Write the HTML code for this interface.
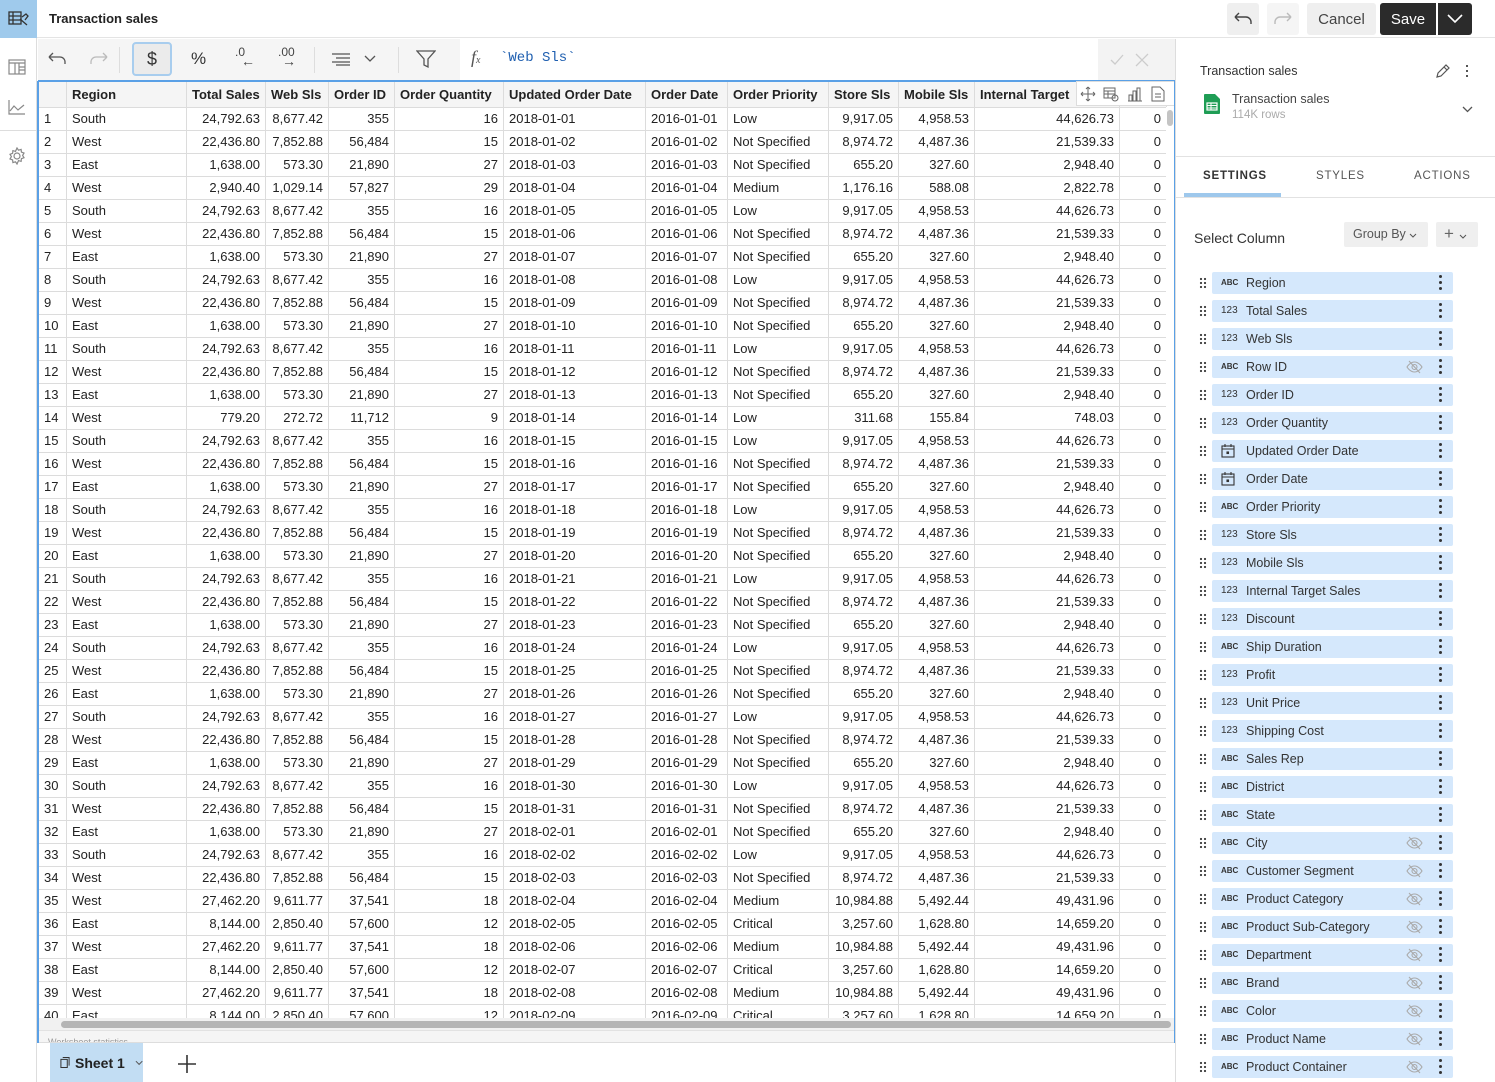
<!DOCTYPE html>
<html style="overflow:hidden;height:1082px"><head><meta charset="utf-8">
<style>
*{box-sizing:border-box;margin:0;padding:0}
body{width:1495px;height:1082px;overflow:hidden;background:#fff;font-family:"Liberation Sans","DejaVu Sans",sans-serif;color:#222;position:relative}
.abs{position:absolute}
#rail{left:0;top:0;width:37px;height:1082px;border-right:1px solid #ddd;background:#fff}
#topbar{left:37px;top:0;width:1458px;height:38px;border-bottom:1px solid #e4e4e4}
.btn{position:absolute;top:3px;height:32px;border-radius:3px;background:#efefef;display:flex;align-items:center;justify-content:center;font-size:15px;color:#444}
#tool{left:38px;top:39px;width:422px;height:41px;background:#f5f5f5}
#fx{left:460px;top:39px;width:638px;height:41px;background:#fff}
#ok{left:1098px;top:39px;width:77px;height:41px;background:#f3f3f3}
#tw{left:38px;top:80px;width:1137px;height:940px;overflow:hidden;border-top:2px solid #5aa0e6}
table{border-collapse:collapse;table-layout:fixed;font-size:13px}
td,th{height:23px;border:1px solid #dcdcdc;padding:0 5px;white-space:nowrap;overflow:hidden;line-height:21px}
th{background:#f5f5f5;font-weight:bold;text-align:left;height:25px;border-top:none}
td.n{text-align:right}
#panel{left:1175px;top:39px;width:320px;height:1043px;border-left:1px solid #ddd}
.item{position:absolute;left:1212px;width:241px;height:22px;background:#d5e8fc;border-radius:2px;font-size:12.5px;color:#333;line-height:22px}
.item .t{position:absolute;left:34px}
.item .ic{position:absolute;left:9px;font-size:8px;font-weight:bold;color:#333}
.item .dots{position:absolute;right:11px;top:3px;width:3px}
.item .dots i{display:block;width:3px;height:3px;background:#333;border-radius:50%;margin-bottom:3px}
.grip{position:absolute;left:1199px;width:8px;height:12px;background-image:radial-gradient(circle,#444 1px,transparent 1.3px);background-size:4px 4px}
.eye{position:absolute;right:30px;top:4px}
</style></head><body>

<div id="rail" class="abs">
 <div class="abs" style="left:0;top:0;width:37px;height:38px;background:#9fcaec"></div>
 <svg class="abs" style="left:8px;top:10px" width="22" height="18" viewBox="0 0 22 18" fill="none" stroke="#333" stroke-width="1.3"><rect x="1" y="2" width="12" height="12"/><path d="M1 6h12M1 10h12M5 2v12"/><path d="M12 9l7 6M14 7l4-3 2 2-3 4"/></svg>
 <svg class="abs" style="left:8px;top:59px" width="18" height="16" viewBox="0 0 18 16" fill="none" stroke="#888" stroke-width="1.2"><rect x="1" y="1" width="16" height="14"/><path d="M1 4h16M7 4v11M11 4v11M11 8h6M11 11h6"/></svg>
 <svg class="abs" style="left:8px;top:99px" width="18" height="16" viewBox="0 0 18 16" fill="none" stroke="#888" stroke-width="1.2"><path d="M1 1v14h16M2 12l4-5 4 4 6-5"/></svg>
 <div class="abs" style="left:0;top:130px;width:37px;border-top:1px solid #ddd"></div>
 <svg class="abs" style="left:8px;top:147px" width="18" height="18" viewBox="0 0 18 18" fill="none" stroke="#888" stroke-width="1.2"><circle cx="9" cy="9" r="3"/><path d="M9 1l1.5 2.2 2.6-.8.3 2.7 2.6 1-1.4 2.3 1.4 2.3-2.6 1-.3 2.7-2.6-.8L9 17l-1.5-2.2-2.6.8-.3-2.7-2.6-1L3.4 9.6 2 7.3l2.6-1 .3-2.7 2.6.8z"/></svg>
</div>

<div id="topbar" class="abs">
 <div class="abs" style="left:12px;top:11px;font-size:13px;font-weight:bold">Transaction sales</div>
 <div class="btn" style="left:1190px;width:32px"><svg width="20" height="14" viewBox="0 0 20 14" fill="none" stroke="#444" stroke-width="1.4"><path d="M2 5h11a5 5 0 0 1 5 5v2M2 5l4-4M2 5l4 4"/></svg></div>
 <div class="btn" style="left:1230px;width:32px;background:#f5f5f5"><svg width="20" height="14" viewBox="0 0 20 14" fill="none" stroke="#bbb" stroke-width="1.4"><path d="M18 5H7a5 5 0 0 0-5 5v2M18 5l-4-4M18 5l-4 4"/></svg></div>
 <div class="btn" style="left:1270px;width:69px">Cancel</div>
 <div class="btn" style="left:1343px;width:56px;background:#2b2b2b;color:#fff;border-radius:3px 0 0 3px">Save</div>
 <div class="btn" style="left:1401px;width:34px;background:#2b2b2b;border-radius:0 3px 3px 0"><svg width="16" height="10" viewBox="0 0 16 10" fill="none" stroke="#fff" stroke-width="1.6"><path d="M1 1l7 7 7-7"/></svg></div>
</div>

<div id="tool" class="abs">
 <svg class="abs" style="left:9px;top:13px" width="20" height="14" viewBox="0 0 20 14" fill="none" stroke="#555" stroke-width="1.3"><path d="M2 5h11a5 5 0 0 1 5 5v2M2 5l4-4M2 5l4 4"/></svg>
 <svg class="abs" style="left:51px;top:13px" width="20" height="14" viewBox="0 0 20 14" fill="none" stroke="#bbb" stroke-width="1.3"><path d="M18 5H7a5 5 0 0 0-5 5v2M18 5l-4-4M18 5l-4 4"/></svg>
 <div class="abs" style="left:81px;top:8px;height:26px;border-left:1px solid #ddd"></div>
 <div class="abs" style="left:94px;top:3px;width:40px;height:34px;border:2px solid #a8cdee;border-radius:4px;background:#ebebeb;font-size:18px;text-align:center;line-height:30px;color:#333">$</div>
 <div class="abs" style="left:153px;top:10px;font-size:17px;color:#333">%</div>
 <div class="abs" style="left:197px;top:6px;font-size:12px;color:#444">.0<br><span style="position:relative;left:6px;top:-6px;font-size:14px">←</span></div>
 <div class="abs" style="left:240px;top:6px;font-size:12px;color:#444">.00<br><span style="position:relative;left:4px;top:-6px;font-size:14px">→</span></div>
 <div class="abs" style="left:276px;top:8px;height:26px;border-left:1px solid #ddd"></div>
 <svg class="abs" style="left:293px;top:13px" width="50" height="14" viewBox="0 0 50 14" fill="none" stroke="#555" stroke-width="1.3"><path d="M1 2h18M5 6h14M1 10h18M5 13h14M34 4l5 5 5-5"/></svg>
 <div class="abs" style="left:360px;top:8px;height:26px;border-left:1px solid #ddd"></div>
 <svg class="abs" style="left:378px;top:11px" width="20" height="19" viewBox="0 0 20 19" fill="none" stroke="#555" stroke-width="1.3"><path d="M1 1h18l-7 8v8l-4-2V9z"/></svg>
</div>
<div id="fx" class="abs">
 <div class="abs" style="left:11px;top:8px;font-style:italic;font-family:'Liberation Serif',serif;font-size:18px;color:#555">f<span style="font-size:10px">x</span></div>
 <div class="abs" style="left:40px;top:11px;font-family:'Liberation Mono',monospace;font-size:14px;color:#1f5fb0">`Web Sls`</div>
</div>
<div id="ok" class="abs">
 <svg class="abs" style="left:12px;top:14px" width="40" height="14" viewBox="0 0 40 14" fill="none" stroke="#ccc" stroke-width="1.3"><path d="M1 7l4 4 8-9M26 1l12 12M38 1L26 13"/></svg>
</div>

<div id="tw" class="abs">
<table>
<colgroup><col style="width:28px"><col style="width:120px"><col style="width:79px"><col style="width:63px"><col style="width:66px"><col style="width:109px"><col style="width:142px"><col style="width:82px"><col style="width:101px"><col style="width:70px"><col style="width:76px"><col style="width:145px"><col style="width:47px"></colgroup>
<tr><th></th><th>Region</th><th>Total Sales</th><th>Web Sls</th><th>Order ID</th><th>Order Quantity</th><th>Updated Order Date</th><th>Order Date</th><th>Order Priority</th><th>Store Sls</th><th>Mobile Sls</th><th>Internal Target</th><th></th></tr>
<tr><td>1</td><td>South</td><td class="n">24,792.63</td><td class="n">8,677.42</td><td class="n">355</td><td class="n">16</td><td>2018-01-01</td><td>2016-01-01</td><td>Low</td><td class="n">9,917.05</td><td class="n">4,958.53</td><td class="n">44,626.73</td><td class="n">0</td></tr>
<tr><td>2</td><td>West</td><td class="n">22,436.80</td><td class="n">7,852.88</td><td class="n">56,484</td><td class="n">15</td><td>2018-01-02</td><td>2016-01-02</td><td>Not Specified</td><td class="n">8,974.72</td><td class="n">4,487.36</td><td class="n">21,539.33</td><td class="n">0</td></tr>
<tr><td>3</td><td>East</td><td class="n">1,638.00</td><td class="n">573.30</td><td class="n">21,890</td><td class="n">27</td><td>2018-01-03</td><td>2016-01-03</td><td>Not Specified</td><td class="n">655.20</td><td class="n">327.60</td><td class="n">2,948.40</td><td class="n">0</td></tr>
<tr><td>4</td><td>West</td><td class="n">2,940.40</td><td class="n">1,029.14</td><td class="n">57,827</td><td class="n">29</td><td>2018-01-04</td><td>2016-01-04</td><td>Medium</td><td class="n">1,176.16</td><td class="n">588.08</td><td class="n">2,822.78</td><td class="n">0</td></tr>
<tr><td>5</td><td>South</td><td class="n">24,792.63</td><td class="n">8,677.42</td><td class="n">355</td><td class="n">16</td><td>2018-01-05</td><td>2016-01-05</td><td>Low</td><td class="n">9,917.05</td><td class="n">4,958.53</td><td class="n">44,626.73</td><td class="n">0</td></tr>
<tr><td>6</td><td>West</td><td class="n">22,436.80</td><td class="n">7,852.88</td><td class="n">56,484</td><td class="n">15</td><td>2018-01-06</td><td>2016-01-06</td><td>Not Specified</td><td class="n">8,974.72</td><td class="n">4,487.36</td><td class="n">21,539.33</td><td class="n">0</td></tr>
<tr><td>7</td><td>East</td><td class="n">1,638.00</td><td class="n">573.30</td><td class="n">21,890</td><td class="n">27</td><td>2018-01-07</td><td>2016-01-07</td><td>Not Specified</td><td class="n">655.20</td><td class="n">327.60</td><td class="n">2,948.40</td><td class="n">0</td></tr>
<tr><td>8</td><td>South</td><td class="n">24,792.63</td><td class="n">8,677.42</td><td class="n">355</td><td class="n">16</td><td>2018-01-08</td><td>2016-01-08</td><td>Low</td><td class="n">9,917.05</td><td class="n">4,958.53</td><td class="n">44,626.73</td><td class="n">0</td></tr>
<tr><td>9</td><td>West</td><td class="n">22,436.80</td><td class="n">7,852.88</td><td class="n">56,484</td><td class="n">15</td><td>2018-01-09</td><td>2016-01-09</td><td>Not Specified</td><td class="n">8,974.72</td><td class="n">4,487.36</td><td class="n">21,539.33</td><td class="n">0</td></tr>
<tr><td>10</td><td>East</td><td class="n">1,638.00</td><td class="n">573.30</td><td class="n">21,890</td><td class="n">27</td><td>2018-01-10</td><td>2016-01-10</td><td>Not Specified</td><td class="n">655.20</td><td class="n">327.60</td><td class="n">2,948.40</td><td class="n">0</td></tr>
<tr><td>11</td><td>South</td><td class="n">24,792.63</td><td class="n">8,677.42</td><td class="n">355</td><td class="n">16</td><td>2018-01-11</td><td>2016-01-11</td><td>Low</td><td class="n">9,917.05</td><td class="n">4,958.53</td><td class="n">44,626.73</td><td class="n">0</td></tr>
<tr><td>12</td><td>West</td><td class="n">22,436.80</td><td class="n">7,852.88</td><td class="n">56,484</td><td class="n">15</td><td>2018-01-12</td><td>2016-01-12</td><td>Not Specified</td><td class="n">8,974.72</td><td class="n">4,487.36</td><td class="n">21,539.33</td><td class="n">0</td></tr>
<tr><td>13</td><td>East</td><td class="n">1,638.00</td><td class="n">573.30</td><td class="n">21,890</td><td class="n">27</td><td>2018-01-13</td><td>2016-01-13</td><td>Not Specified</td><td class="n">655.20</td><td class="n">327.60</td><td class="n">2,948.40</td><td class="n">0</td></tr>
<tr><td>14</td><td>West</td><td class="n">779.20</td><td class="n">272.72</td><td class="n">11,712</td><td class="n">9</td><td>2018-01-14</td><td>2016-01-14</td><td>Low</td><td class="n">311.68</td><td class="n">155.84</td><td class="n">748.03</td><td class="n">0</td></tr>
<tr><td>15</td><td>South</td><td class="n">24,792.63</td><td class="n">8,677.42</td><td class="n">355</td><td class="n">16</td><td>2018-01-15</td><td>2016-01-15</td><td>Low</td><td class="n">9,917.05</td><td class="n">4,958.53</td><td class="n">44,626.73</td><td class="n">0</td></tr>
<tr><td>16</td><td>West</td><td class="n">22,436.80</td><td class="n">7,852.88</td><td class="n">56,484</td><td class="n">15</td><td>2018-01-16</td><td>2016-01-16</td><td>Not Specified</td><td class="n">8,974.72</td><td class="n">4,487.36</td><td class="n">21,539.33</td><td class="n">0</td></tr>
<tr><td>17</td><td>East</td><td class="n">1,638.00</td><td class="n">573.30</td><td class="n">21,890</td><td class="n">27</td><td>2018-01-17</td><td>2016-01-17</td><td>Not Specified</td><td class="n">655.20</td><td class="n">327.60</td><td class="n">2,948.40</td><td class="n">0</td></tr>
<tr><td>18</td><td>South</td><td class="n">24,792.63</td><td class="n">8,677.42</td><td class="n">355</td><td class="n">16</td><td>2018-01-18</td><td>2016-01-18</td><td>Low</td><td class="n">9,917.05</td><td class="n">4,958.53</td><td class="n">44,626.73</td><td class="n">0</td></tr>
<tr><td>19</td><td>West</td><td class="n">22,436.80</td><td class="n">7,852.88</td><td class="n">56,484</td><td class="n">15</td><td>2018-01-19</td><td>2016-01-19</td><td>Not Specified</td><td class="n">8,974.72</td><td class="n">4,487.36</td><td class="n">21,539.33</td><td class="n">0</td></tr>
<tr><td>20</td><td>East</td><td class="n">1,638.00</td><td class="n">573.30</td><td class="n">21,890</td><td class="n">27</td><td>2018-01-20</td><td>2016-01-20</td><td>Not Specified</td><td class="n">655.20</td><td class="n">327.60</td><td class="n">2,948.40</td><td class="n">0</td></tr>
<tr><td>21</td><td>South</td><td class="n">24,792.63</td><td class="n">8,677.42</td><td class="n">355</td><td class="n">16</td><td>2018-01-21</td><td>2016-01-21</td><td>Low</td><td class="n">9,917.05</td><td class="n">4,958.53</td><td class="n">44,626.73</td><td class="n">0</td></tr>
<tr><td>22</td><td>West</td><td class="n">22,436.80</td><td class="n">7,852.88</td><td class="n">56,484</td><td class="n">15</td><td>2018-01-22</td><td>2016-01-22</td><td>Not Specified</td><td class="n">8,974.72</td><td class="n">4,487.36</td><td class="n">21,539.33</td><td class="n">0</td></tr>
<tr><td>23</td><td>East</td><td class="n">1,638.00</td><td class="n">573.30</td><td class="n">21,890</td><td class="n">27</td><td>2018-01-23</td><td>2016-01-23</td><td>Not Specified</td><td class="n">655.20</td><td class="n">327.60</td><td class="n">2,948.40</td><td class="n">0</td></tr>
<tr><td>24</td><td>South</td><td class="n">24,792.63</td><td class="n">8,677.42</td><td class="n">355</td><td class="n">16</td><td>2018-01-24</td><td>2016-01-24</td><td>Low</td><td class="n">9,917.05</td><td class="n">4,958.53</td><td class="n">44,626.73</td><td class="n">0</td></tr>
<tr><td>25</td><td>West</td><td class="n">22,436.80</td><td class="n">7,852.88</td><td class="n">56,484</td><td class="n">15</td><td>2018-01-25</td><td>2016-01-25</td><td>Not Specified</td><td class="n">8,974.72</td><td class="n">4,487.36</td><td class="n">21,539.33</td><td class="n">0</td></tr>
<tr><td>26</td><td>East</td><td class="n">1,638.00</td><td class="n">573.30</td><td class="n">21,890</td><td class="n">27</td><td>2018-01-26</td><td>2016-01-26</td><td>Not Specified</td><td class="n">655.20</td><td class="n">327.60</td><td class="n">2,948.40</td><td class="n">0</td></tr>
<tr><td>27</td><td>South</td><td class="n">24,792.63</td><td class="n">8,677.42</td><td class="n">355</td><td class="n">16</td><td>2018-01-27</td><td>2016-01-27</td><td>Low</td><td class="n">9,917.05</td><td class="n">4,958.53</td><td class="n">44,626.73</td><td class="n">0</td></tr>
<tr><td>28</td><td>West</td><td class="n">22,436.80</td><td class="n">7,852.88</td><td class="n">56,484</td><td class="n">15</td><td>2018-01-28</td><td>2016-01-28</td><td>Not Specified</td><td class="n">8,974.72</td><td class="n">4,487.36</td><td class="n">21,539.33</td><td class="n">0</td></tr>
<tr><td>29</td><td>East</td><td class="n">1,638.00</td><td class="n">573.30</td><td class="n">21,890</td><td class="n">27</td><td>2018-01-29</td><td>2016-01-29</td><td>Not Specified</td><td class="n">655.20</td><td class="n">327.60</td><td class="n">2,948.40</td><td class="n">0</td></tr>
<tr><td>30</td><td>South</td><td class="n">24,792.63</td><td class="n">8,677.42</td><td class="n">355</td><td class="n">16</td><td>2018-01-30</td><td>2016-01-30</td><td>Low</td><td class="n">9,917.05</td><td class="n">4,958.53</td><td class="n">44,626.73</td><td class="n">0</td></tr>
<tr><td>31</td><td>West</td><td class="n">22,436.80</td><td class="n">7,852.88</td><td class="n">56,484</td><td class="n">15</td><td>2018-01-31</td><td>2016-01-31</td><td>Not Specified</td><td class="n">8,974.72</td><td class="n">4,487.36</td><td class="n">21,539.33</td><td class="n">0</td></tr>
<tr><td>32</td><td>East</td><td class="n">1,638.00</td><td class="n">573.30</td><td class="n">21,890</td><td class="n">27</td><td>2018-02-01</td><td>2016-02-01</td><td>Not Specified</td><td class="n">655.20</td><td class="n">327.60</td><td class="n">2,948.40</td><td class="n">0</td></tr>
<tr><td>33</td><td>South</td><td class="n">24,792.63</td><td class="n">8,677.42</td><td class="n">355</td><td class="n">16</td><td>2018-02-02</td><td>2016-02-02</td><td>Low</td><td class="n">9,917.05</td><td class="n">4,958.53</td><td class="n">44,626.73</td><td class="n">0</td></tr>
<tr><td>34</td><td>West</td><td class="n">22,436.80</td><td class="n">7,852.88</td><td class="n">56,484</td><td class="n">15</td><td>2018-02-03</td><td>2016-02-03</td><td>Not Specified</td><td class="n">8,974.72</td><td class="n">4,487.36</td><td class="n">21,539.33</td><td class="n">0</td></tr>
<tr><td>35</td><td>West</td><td class="n">27,462.20</td><td class="n">9,611.77</td><td class="n">37,541</td><td class="n">18</td><td>2018-02-04</td><td>2016-02-04</td><td>Medium</td><td class="n">10,984.88</td><td class="n">5,492.44</td><td class="n">49,431.96</td><td class="n">0</td></tr>
<tr><td>36</td><td>East</td><td class="n">8,144.00</td><td class="n">2,850.40</td><td class="n">57,600</td><td class="n">12</td><td>2018-02-05</td><td>2016-02-05</td><td>Critical</td><td class="n">3,257.60</td><td class="n">1,628.80</td><td class="n">14,659.20</td><td class="n">0</td></tr>
<tr><td>37</td><td>West</td><td class="n">27,462.20</td><td class="n">9,611.77</td><td class="n">37,541</td><td class="n">18</td><td>2018-02-06</td><td>2016-02-06</td><td>Medium</td><td class="n">10,984.88</td><td class="n">5,492.44</td><td class="n">49,431.96</td><td class="n">0</td></tr>
<tr><td>38</td><td>East</td><td class="n">8,144.00</td><td class="n">2,850.40</td><td class="n">57,600</td><td class="n">12</td><td>2018-02-07</td><td>2016-02-07</td><td>Critical</td><td class="n">3,257.60</td><td class="n">1,628.80</td><td class="n">14,659.20</td><td class="n">0</td></tr>
<tr><td>39</td><td>West</td><td class="n">27,462.20</td><td class="n">9,611.77</td><td class="n">37,541</td><td class="n">18</td><td>2018-02-08</td><td>2016-02-08</td><td>Medium</td><td class="n">10,984.88</td><td class="n">5,492.44</td><td class="n">49,431.96</td><td class="n">0</td></tr>
<tr><td>40</td><td>East</td><td class="n">8,144.00</td><td class="n">2,850.40</td><td class="n">57,600</td><td class="n">12</td><td>2018-02-09</td><td>2016-02-09</td><td>Critical</td><td class="n">3,257.60</td><td class="n">1,628.80</td><td class="n">14,659.20</td><td class="n">0</td></tr>
</table>
</div>
<div class="abs" style="left:1076px;top:81px;width:99px;height:25px;background:#fff;border:1px solid #ddd;display:flex">
 <svg style="margin:4px 0 0 3px" width="16" height="16" viewBox="0 0 16 16" fill="none" stroke="#666" stroke-width="1"><path d="M8 1v14M1 8h14M8 1l-2 2M8 1l2 2M8 15l-2-2M8 15l2-2M1 8l2-2M1 8l2 2M15 8l-2-2M15 8l-2 2"/></svg>
 <svg style="margin:4px 0 0 7px" width="16" height="16" viewBox="0 0 16 16" fill="none" stroke="#666" stroke-width="1"><rect x="1" y="2" width="11" height="10"/><path d="M1 5h11M1 8h11M5 5v7"/><circle cx="12" cy="12" r="3"/></svg>
 <svg style="margin:4px 0 0 8px" width="16" height="16" viewBox="0 0 16 16" fill="none" stroke="#666" stroke-width="1"><path d="M1 15h14M2 15V9h3v6M6 15V5h3v10M10 15V2h3v13"/></svg>
 <svg style="margin:4px 0 0 8px" width="14" height="16" viewBox="0 0 14 16" fill="none" stroke="#666" stroke-width="1"><path d="M1 1h8l4 4v10H1zM4 8h6M4 11h6"/></svg>
</div>
<div class="abs" style="left:1166px;top:107px;width:9px;height:913px;background:#fff"></div>
<div class="abs" style="left:1167px;top:110px;width:6px;height:16px;background:#c4c4c4;border-radius:3px"></div>
<div class="abs" style="left:38px;top:1018px;width:1137px;height:12px;background:#f1f1f1"></div>
<div class="abs" style="left:61px;top:1021px;width:1110px;height:7px;background:#b5b5b5;border-radius:4px"></div>
<div class="abs" style="left:38px;top:1030px;width:1137px;height:13px;background:#f5f5f5;border-top:1px solid #e2e2e2;border-bottom:1px solid #ddd;font-size:9px;color:#999;padding-left:10px;overflow:hidden;line-height:22px">Worksheet statistics</div>
<div class="abs" style="left:1174px;top:81px;width:2px;height:962px;background:#5aa0e6"></div>
<div class="abs" style="left:37px;top:81px;width:2px;height:962px;background:#5aa0e6"></div>
<div class="abs" style="left:50px;top:1043px;width:93px;height:39px;background:#c2ddf3;display:flex;align-items:center;white-space:nowrap;overflow:hidden;padding-left:10px">
 <svg width="11" height="13" viewBox="0 0 11 13" fill="none" stroke="#333" stroke-width="1.1"><path d="M3 1h7v9M1 3h7v9H1z"/></svg>
 <span style="font-size:14px;font-weight:bold;color:#222;margin-left:5px">Sheet 1</span>
 <svg style="margin-left:10px" width="9" height="6" viewBox="0 0 9 6" fill="none" stroke="#555" stroke-width="1.1"><path d="M1 1l3.5 3.5L8 1"/></svg>
</div>
<svg class="abs" style="left:178px;top:1055px" width="18" height="18" viewBox="0 0 18 18" stroke="#333" stroke-width="1.6"><path d="M9 0v18M0 9h18"/></svg>

<div id="panel" class="abs"></div>
<div class="abs" style="left:1200px;top:64px;font-size:12.5px;color:#333">Transaction sales</div>
<svg class="abs" style="left:1435px;top:63px" width="16" height="16" viewBox="0 0 16 16" fill="none" stroke="#555" stroke-width="1.2"><path d="M2 14l1-4 8-8 3 3-8 8zM9 4l3 3"/></svg>
<div class="abs" style="left:1466px;top:65px;width:3px"><i style="display:block;width:2px;height:2px;background:#555;margin-bottom:3px"></i><i style="display:block;width:2px;height:2px;background:#555;margin-bottom:3px"></i><i style="display:block;width:2px;height:2px;background:#555"></i></div>
<svg class="abs" style="left:1204px;top:94px" width="16" height="20" viewBox="0 0 16 20"><path d="M0 1a1 1 0 0 1 1-1h10l5 5v14a1 1 0 0 1-1 1H1a1 1 0 0 1-1-1z" fill="#1f9d55"/><rect x="3" y="9" width="10" height="7" fill="none" stroke="#fff" stroke-width="1.2"/><path d="M3 11.5h10M3 14h10M7 9v7" stroke="#fff" stroke-width="1"/></svg>
<div class="abs" style="left:1232px;top:92px;font-size:12.5px;color:#444">Transaction sales</div>
<div class="abs" style="left:1232px;top:109px;font-size:11.5px;color:#aaa">114K rows</div>
<svg class="abs" style="left:1462px;top:106px" width="11" height="7" viewBox="0 0 11 7" fill="none" stroke="#555" stroke-width="1.3"><path d="M1 1l4.5 4.5L10 1"/></svg>
<div class="abs" style="left:1176px;top:156px;width:319px;border-top:1px solid #e2e2e2"></div>
<div class="abs" style="left:1203px;top:170px;font-size:11.5px;font-weight:bold;letter-spacing:.8px;color:#333">SETTINGS</div>
<div class="abs" style="left:1316px;top:170px;font-size:11.5px;letter-spacing:.8px;color:#555">STYLES</div>
<div class="abs" style="left:1414px;top:170px;font-size:11.5px;letter-spacing:.8px;color:#555">ACTIONS</div>
<div class="abs" style="left:1184px;top:193px;width:97px;height:4px;background:#9ec8ec"></div>
<div class="abs" style="left:1176px;top:197px;width:319px;border-top:1px solid #e2e2e2"></div>
<div class="abs" style="left:1194px;top:230px;font-size:14px;color:#333">Select Column</div>
<div class="abs" style="left:1344px;top:222px;width:84px;height:25px;background:#efefef;border-radius:2px;font-size:12.5px;color:#555;line-height:25px;padding-left:9px;white-space:nowrap">Group By <svg width="8" height="5" viewBox="0 0 8 5" fill="none" stroke="#555"><path d="M1 1l3 3 3-3"/></svg></div>
<div class="abs" style="left:1436px;top:222px;width:42px;height:25px;background:#efefef;border-radius:2px;font-size:17px;color:#666;line-height:24px;padding-left:8px;white-space:nowrap">+ <svg width="8" height="5" viewBox="0 0 8 5" fill="none" stroke="#555"><path d="M1 1l3 3 3-3"/></svg></div>

<div class="grip" style="top:277px"></div><div class="item" style="top:272px"><span class="ic">ABC</span><span class="t">Region</span><span class="dots"><i></i><i></i><i></i></span></div>
<div class="grip" style="top:305px"></div><div class="item" style="top:300px"><span class="ic" style="font-size:10px;font-weight:normal">123</span><span class="t">Total Sales</span><span class="dots"><i></i><i></i><i></i></span></div>
<div class="grip" style="top:333px"></div><div class="item" style="top:328px"><span class="ic" style="font-size:10px;font-weight:normal">123</span><span class="t">Web Sls</span><span class="dots"><i></i><i></i><i></i></span></div>
<div class="grip" style="top:361px"></div><div class="item" style="top:356px"><span class="ic">ABC</span><span class="t">Row ID</span><svg class="eye" width="17" height="14" viewBox="0 0 17 14" fill="none" stroke="#aaa" stroke-width="1.1"><path d="M1 7s3-5 7.5-5S16 7 16 7s-3 5-7.5 5S1 7 1 7z"/><circle cx="8.5" cy="7" r="2.5"/><path d="M3 1l11 12"/></svg><span class="dots"><i></i><i></i><i></i></span></div>
<div class="grip" style="top:389px"></div><div class="item" style="top:384px"><span class="ic" style="font-size:10px;font-weight:normal">123</span><span class="t">Order ID</span><span class="dots"><i></i><i></i><i></i></span></div>
<div class="grip" style="top:417px"></div><div class="item" style="top:412px"><span class="ic" style="font-size:10px;font-weight:normal">123</span><span class="t">Order Quantity</span><span class="dots"><i></i><i></i><i></i></span></div>
<div class="grip" style="top:445px"></div><div class="item" style="top:440px"><svg class="ic" style="top:4px" width="14" height="14" viewBox="0 0 14 14" fill="none" stroke="#333" stroke-width="1.1"><rect x="1" y="2" width="12" height="11"/><path d="M1 5h12M4 0v3M10 0v3"/><rect x="6" y="8" width="1.5" height="1.5" fill="#333"/></svg><span class="t">Updated Order Date</span><span class="dots"><i></i><i></i><i></i></span></div>
<div class="grip" style="top:473px"></div><div class="item" style="top:468px"><svg class="ic" style="top:4px" width="14" height="14" viewBox="0 0 14 14" fill="none" stroke="#333" stroke-width="1.1"><rect x="1" y="2" width="12" height="11"/><path d="M1 5h12M4 0v3M10 0v3"/><rect x="6" y="8" width="1.5" height="1.5" fill="#333"/></svg><span class="t">Order Date</span><span class="dots"><i></i><i></i><i></i></span></div>
<div class="grip" style="top:501px"></div><div class="item" style="top:496px"><span class="ic">ABC</span><span class="t">Order Priority</span><span class="dots"><i></i><i></i><i></i></span></div>
<div class="grip" style="top:529px"></div><div class="item" style="top:524px"><span class="ic" style="font-size:10px;font-weight:normal">123</span><span class="t">Store Sls</span><span class="dots"><i></i><i></i><i></i></span></div>
<div class="grip" style="top:557px"></div><div class="item" style="top:552px"><span class="ic" style="font-size:10px;font-weight:normal">123</span><span class="t">Mobile Sls</span><span class="dots"><i></i><i></i><i></i></span></div>
<div class="grip" style="top:585px"></div><div class="item" style="top:580px"><span class="ic" style="font-size:10px;font-weight:normal">123</span><span class="t">Internal Target Sales</span><span class="dots"><i></i><i></i><i></i></span></div>
<div class="grip" style="top:613px"></div><div class="item" style="top:608px"><span class="ic" style="font-size:10px;font-weight:normal">123</span><span class="t">Discount</span><span class="dots"><i></i><i></i><i></i></span></div>
<div class="grip" style="top:641px"></div><div class="item" style="top:636px"><span class="ic">ABC</span><span class="t">Ship Duration</span><span class="dots"><i></i><i></i><i></i></span></div>
<div class="grip" style="top:669px"></div><div class="item" style="top:664px"><span class="ic" style="font-size:10px;font-weight:normal">123</span><span class="t">Profit</span><span class="dots"><i></i><i></i><i></i></span></div>
<div class="grip" style="top:697px"></div><div class="item" style="top:692px"><span class="ic" style="font-size:10px;font-weight:normal">123</span><span class="t">Unit Price</span><span class="dots"><i></i><i></i><i></i></span></div>
<div class="grip" style="top:725px"></div><div class="item" style="top:720px"><span class="ic" style="font-size:10px;font-weight:normal">123</span><span class="t">Shipping Cost</span><span class="dots"><i></i><i></i><i></i></span></div>
<div class="grip" style="top:753px"></div><div class="item" style="top:748px"><span class="ic">ABC</span><span class="t">Sales Rep</span><span class="dots"><i></i><i></i><i></i></span></div>
<div class="grip" style="top:781px"></div><div class="item" style="top:776px"><span class="ic">ABC</span><span class="t">District</span><span class="dots"><i></i><i></i><i></i></span></div>
<div class="grip" style="top:809px"></div><div class="item" style="top:804px"><span class="ic">ABC</span><span class="t">State</span><span class="dots"><i></i><i></i><i></i></span></div>
<div class="grip" style="top:837px"></div><div class="item" style="top:832px"><span class="ic">ABC</span><span class="t">City</span><svg class="eye" width="17" height="14" viewBox="0 0 17 14" fill="none" stroke="#aaa" stroke-width="1.1"><path d="M1 7s3-5 7.5-5S16 7 16 7s-3 5-7.5 5S1 7 1 7z"/><circle cx="8.5" cy="7" r="2.5"/><path d="M3 1l11 12"/></svg><span class="dots"><i></i><i></i><i></i></span></div>
<div class="grip" style="top:865px"></div><div class="item" style="top:860px"><span class="ic">ABC</span><span class="t">Customer Segment</span><svg class="eye" width="17" height="14" viewBox="0 0 17 14" fill="none" stroke="#aaa" stroke-width="1.1"><path d="M1 7s3-5 7.5-5S16 7 16 7s-3 5-7.5 5S1 7 1 7z"/><circle cx="8.5" cy="7" r="2.5"/><path d="M3 1l11 12"/></svg><span class="dots"><i></i><i></i><i></i></span></div>
<div class="grip" style="top:893px"></div><div class="item" style="top:888px"><span class="ic">ABC</span><span class="t">Product Category</span><svg class="eye" width="17" height="14" viewBox="0 0 17 14" fill="none" stroke="#aaa" stroke-width="1.1"><path d="M1 7s3-5 7.5-5S16 7 16 7s-3 5-7.5 5S1 7 1 7z"/><circle cx="8.5" cy="7" r="2.5"/><path d="M3 1l11 12"/></svg><span class="dots"><i></i><i></i><i></i></span></div>
<div class="grip" style="top:921px"></div><div class="item" style="top:916px"><span class="ic">ABC</span><span class="t">Product Sub-Category</span><svg class="eye" width="17" height="14" viewBox="0 0 17 14" fill="none" stroke="#aaa" stroke-width="1.1"><path d="M1 7s3-5 7.5-5S16 7 16 7s-3 5-7.5 5S1 7 1 7z"/><circle cx="8.5" cy="7" r="2.5"/><path d="M3 1l11 12"/></svg><span class="dots"><i></i><i></i><i></i></span></div>
<div class="grip" style="top:949px"></div><div class="item" style="top:944px"><span class="ic">ABC</span><span class="t">Department</span><svg class="eye" width="17" height="14" viewBox="0 0 17 14" fill="none" stroke="#aaa" stroke-width="1.1"><path d="M1 7s3-5 7.5-5S16 7 16 7s-3 5-7.5 5S1 7 1 7z"/><circle cx="8.5" cy="7" r="2.5"/><path d="M3 1l11 12"/></svg><span class="dots"><i></i><i></i><i></i></span></div>
<div class="grip" style="top:977px"></div><div class="item" style="top:972px"><span class="ic">ABC</span><span class="t">Brand</span><svg class="eye" width="17" height="14" viewBox="0 0 17 14" fill="none" stroke="#aaa" stroke-width="1.1"><path d="M1 7s3-5 7.5-5S16 7 16 7s-3 5-7.5 5S1 7 1 7z"/><circle cx="8.5" cy="7" r="2.5"/><path d="M3 1l11 12"/></svg><span class="dots"><i></i><i></i><i></i></span></div>
<div class="grip" style="top:1005px"></div><div class="item" style="top:1000px"><span class="ic">ABC</span><span class="t">Color</span><svg class="eye" width="17" height="14" viewBox="0 0 17 14" fill="none" stroke="#aaa" stroke-width="1.1"><path d="M1 7s3-5 7.5-5S16 7 16 7s-3 5-7.5 5S1 7 1 7z"/><circle cx="8.5" cy="7" r="2.5"/><path d="M3 1l11 12"/></svg><span class="dots"><i></i><i></i><i></i></span></div>
<div class="grip" style="top:1033px"></div><div class="item" style="top:1028px"><span class="ic">ABC</span><span class="t">Product Name</span><svg class="eye" width="17" height="14" viewBox="0 0 17 14" fill="none" stroke="#aaa" stroke-width="1.1"><path d="M1 7s3-5 7.5-5S16 7 16 7s-3 5-7.5 5S1 7 1 7z"/><circle cx="8.5" cy="7" r="2.5"/><path d="M3 1l11 12"/></svg><span class="dots"><i></i><i></i><i></i></span></div>
<div class="grip" style="top:1061px"></div><div class="item" style="top:1056px"><span class="ic">ABC</span><span class="t">Product Container</span><svg class="eye" width="17" height="14" viewBox="0 0 17 14" fill="none" stroke="#aaa" stroke-width="1.1"><path d="M1 7s3-5 7.5-5S16 7 16 7s-3 5-7.5 5S1 7 1 7z"/><circle cx="8.5" cy="7" r="2.5"/><path d="M3 1l11 12"/></svg><span class="dots"><i></i><i></i><i></i></span></div>
</body></html>
